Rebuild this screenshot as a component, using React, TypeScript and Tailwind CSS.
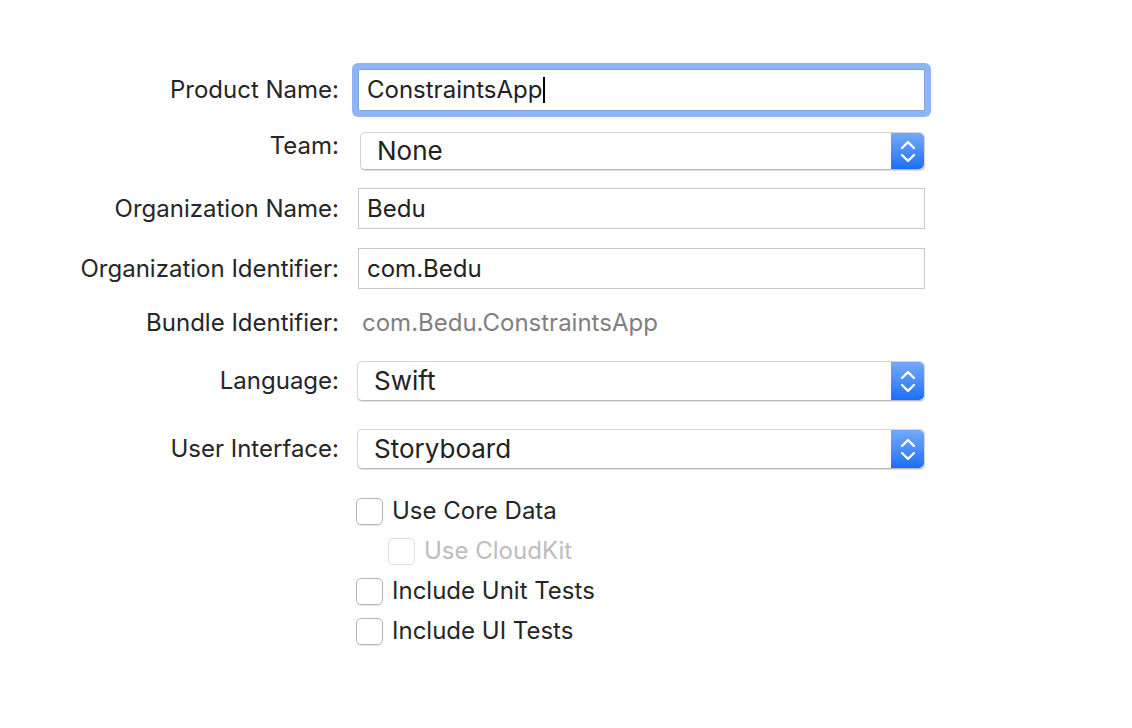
import type { ReactNode } from "react";

const font = { fontFamily: "Inter, 'Noto Sans', sans-serif" };

function Label({ children }: { children: ReactNode }) {
  return (
    <div className="w-[339px] shrink-0 text-right text-[24px] leading-[28px] text-[#262626]">
      {children}
    </div>
  );
}

function Stepper() {
  return (
    <div className="flex h-full w-[33px] shrink-0 flex-col items-center justify-center gap-[3px] rounded-r-[5px] bg-gradient-to-b from-[#72aaf8] to-[#1a6ef5]">
      <svg width="16" height="10" viewBox="0 0 16 10" fill="none">
        <path d="M2 8 L8 2.2 L14 8" stroke="white" strokeWidth="2.3" strokeLinecap="round" strokeLinejoin="round" />
      </svg>
      <svg width="16" height="10" viewBox="0 0 16 10" fill="none">
        <path d="M2 2 L8 7.8 L14 2" stroke="white" strokeWidth="2.3" strokeLinecap="round" strokeLinejoin="round" />
      </svg>
    </div>
  );
}

function Select({ value, className }: { value: string; className: string }) {
  return (
    <div
      className={`flex shrink-0 items-center rounded-[5px] border border-[#d4d4d4] border-b-[#b9b9b9] bg-white shadow-[0_1px_1px_rgba(0,0,0,0.12)] ${className}`}
    >
      <span className="flex-1 pl-[16px] text-[26px] leading-none text-[#222]">{value}</span>
      <Stepper />
    </div>
  );
}

function TextField({ value }: { value: string }) {
  return (
    <div className="ml-[19px] flex h-[41px] w-[567px] items-center border border-[#c9c9c9] bg-white pl-[8px] text-[24px] text-[#222]">
      {value}
    </div>
  );
}

function Checkbox({ label, disabled = false, indent = false }: { label: string; disabled?: boolean; indent?: boolean }) {
  return (
    <div className={`flex h-[40px] items-center gap-[9px] ${indent ? "pl-[32px]" : ""}`}>
      <div
        className={`h-[27px] w-[27px] rounded-[5px] border bg-white ${
          disabled ? "border-[#dedede]" : "border-[#b5b5b5] shadow-[0_1px_1px_rgba(0,0,0,0.08)]"
        }`}
      />
      <span className={`text-[24px] leading-none ${disabled ? "text-[#bdbdbd]" : "text-[#262626]"}`}>{label}</span>
    </div>
  );
}

export default function App() {
  return (
    <div className="min-h-[728px] w-[1132px] bg-white pt-[69px]" style={font}>
      {/* Product name (focused field) */}
      <div className="flex items-center">
        <Label>Product Name:</Label>
        <div className="ml-[19px] flex h-[42px] w-[567px] items-center rounded-[2px] border border-[#7ea4dd] bg-white pl-[8px] text-[24px] text-[#222] shadow-[0_0_0_6px_#8db5f6]">
          ConstraintsApp
          <span className="ml-[1px] h-[26px] w-[2px] bg-black" />
        </div>
      </div>

      {/* Team label sits higher than its popup */}
      <div className="mt-[21px] flex items-start">
        <Label>Team:</Label>
        <Select value="None" className="ml-[21px] h-[38px] w-[565px]" />
      </div>

      <div className="mt-[18px] flex items-center">
        <Label>Organization Name:</Label>
        <TextField value="Bedu" />
      </div>

      <div className="mt-[19px] flex items-center">
        <Label>Organization Identifier:</Label>
        <TextField value="com.Bedu" />
      </div>

      <div className="mt-[14px] flex h-[40px] items-center">
        <Label>Bundle Identifier:</Label>
        <span className="ml-[23px] text-[24px] text-[#808080]">com.Bedu.ConstraintsApp</span>
      </div>

      <div className="mt-[18px] flex items-center">
        <Label>Language:</Label>
        <Select value="Swift" className="ml-[18px] h-[40px] w-[568px]" />
      </div>

      <div className="mt-[28px] flex items-center">
        <Label>User Interface:</Label>
        <Select value="Storyboard" className="ml-[18px] h-[40px] w-[568px]" />
      </div>

      <div className="ml-[356px] mt-[22px] flex flex-col">
        <Checkbox label="Use Core Data" />
        <Checkbox label="Use CloudKit" disabled indent />
        <Checkbox label="Include Unit Tests" />
        <Checkbox label="Include UI Tests" />
      </div>
    </div>
  );
}
